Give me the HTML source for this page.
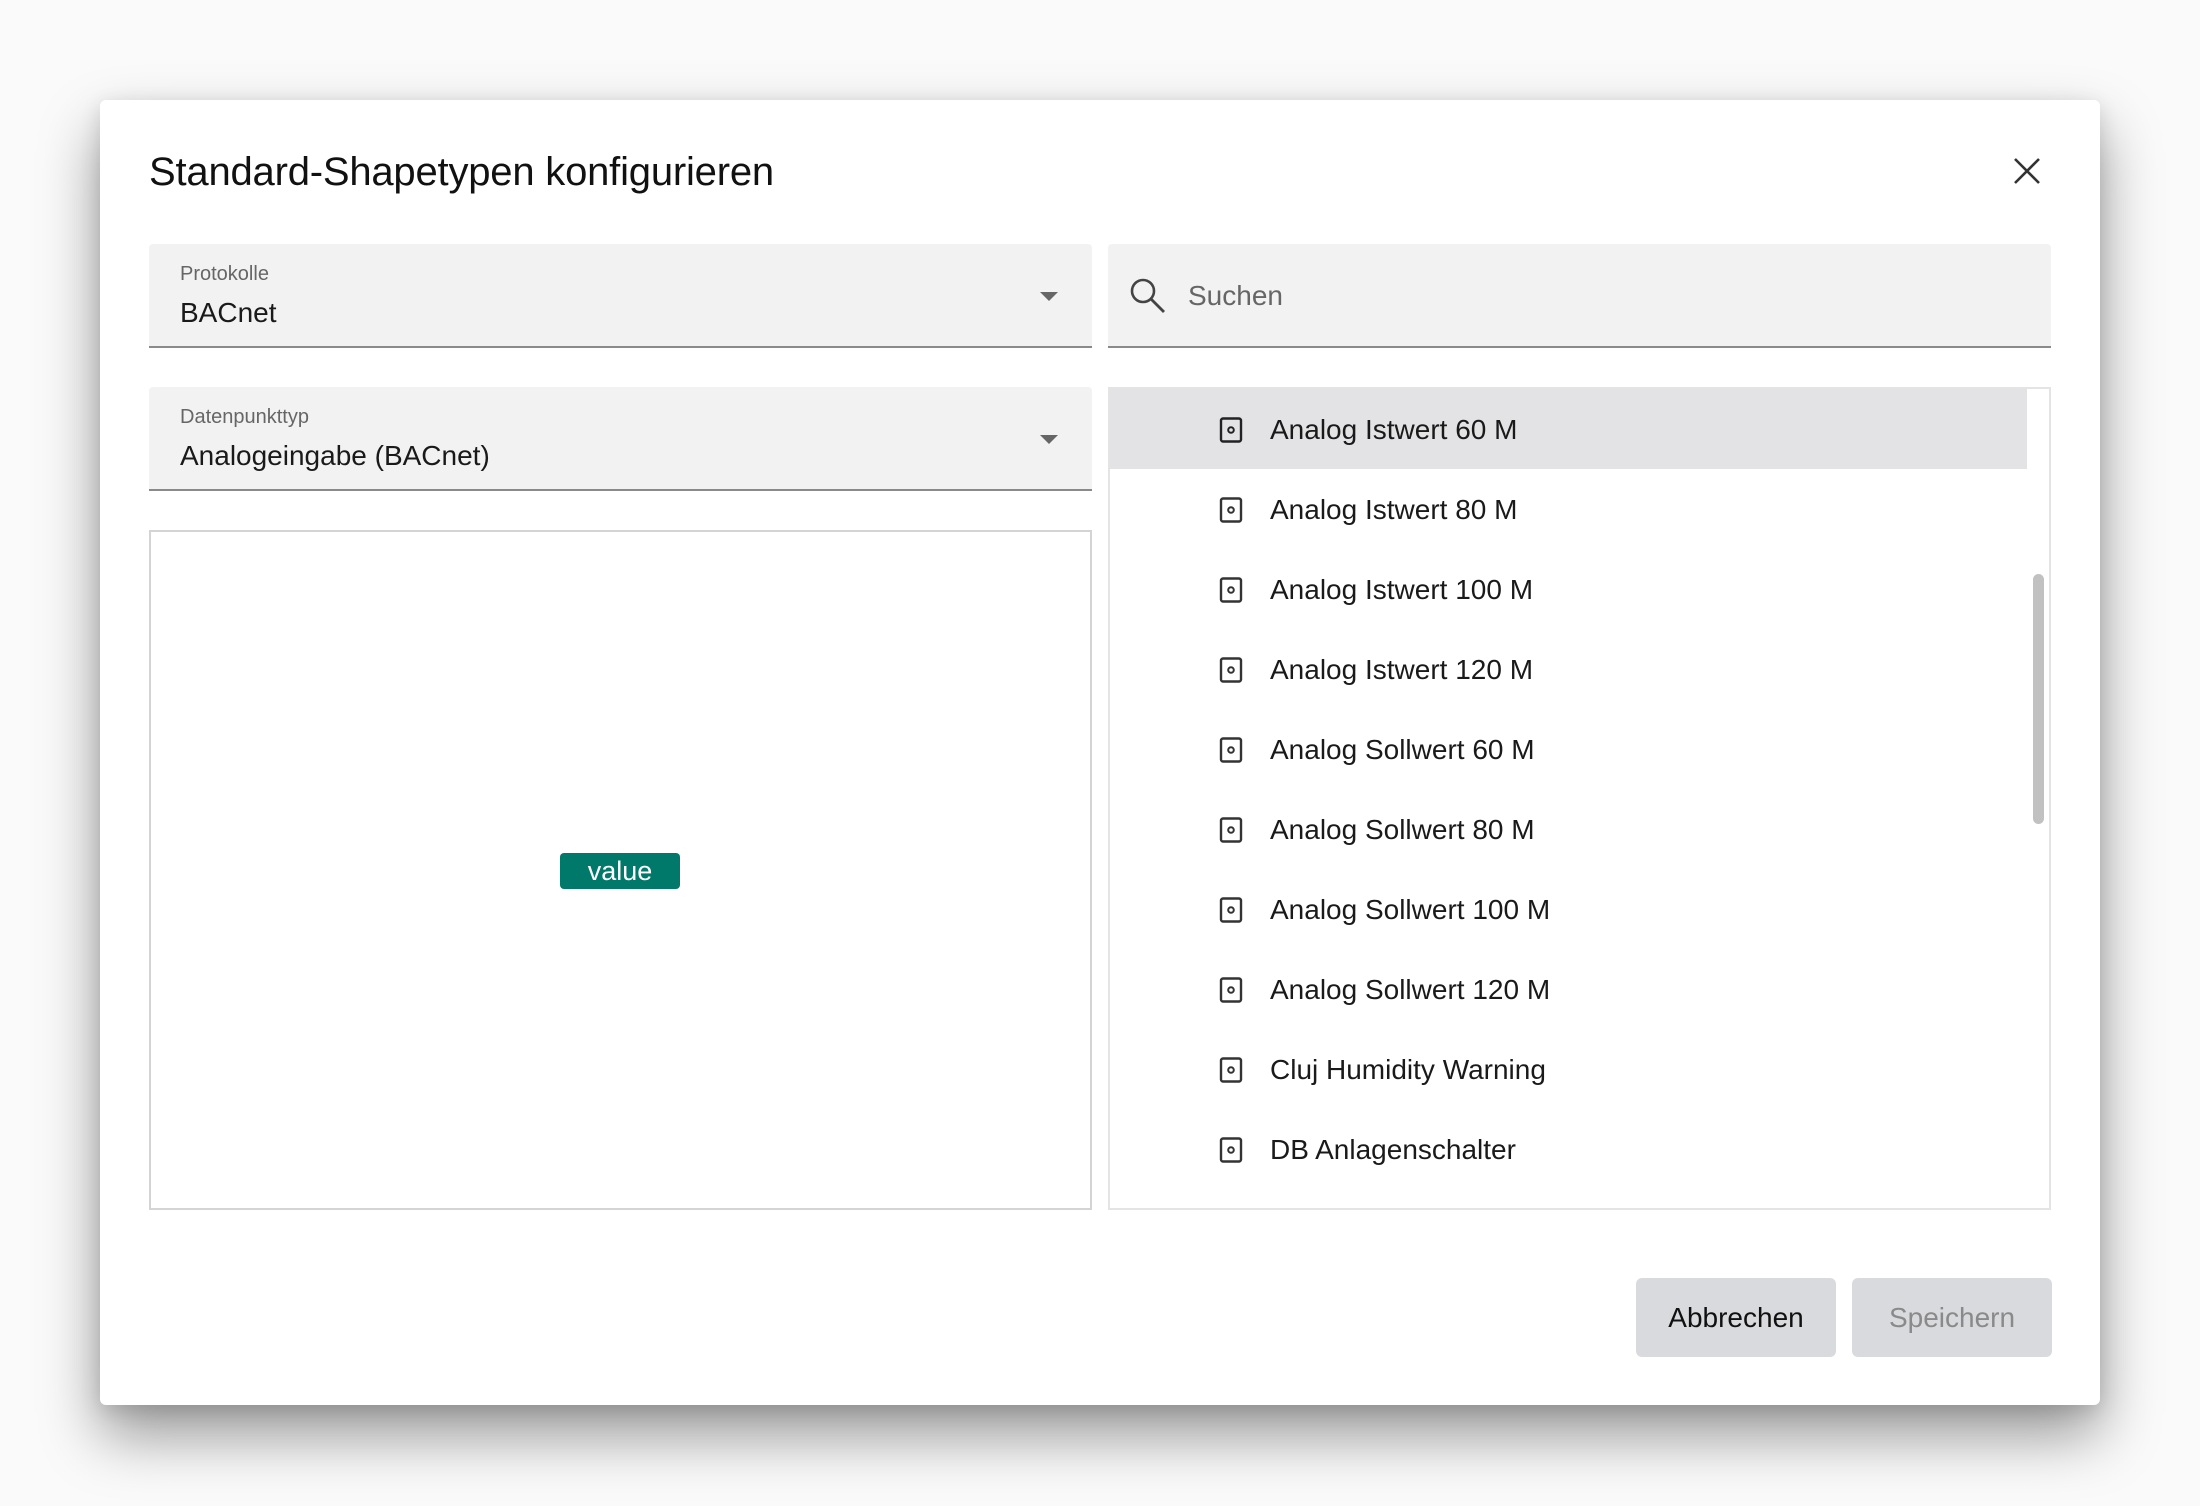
<!DOCTYPE html>
<html><head><meta charset="utf-8"><style>
*{box-sizing:border-box;margin:0;padding:0}
body{width:2200px;height:1506px;background:#fafafa;font-family:"Liberation Sans",Roboto,sans-serif;position:relative;overflow:hidden;color:#1a1a1a}
.dlg{position:absolute;left:100px;top:100px;width:2000px;height:1305px;background:#fff;border-radius:6px;box-shadow:0 30px 60px rgba(0,0,0,0.4),0 5px 20px rgba(0,0,0,0.12)}
.a{position:absolute}
.title{left:149px;top:150px;font-size:40px;color:#111;letter-spacing:-0.2px}
.field{background:#f2f2f2;border-bottom:2px solid #8a8a8a;border-radius:4px 4px 0 0}
.lbl{font-size:20px;color:#666}
.val{font-size:28px;color:#1a1a1a}
.arrow{width:0;height:0;border-left:9px solid transparent;border-right:9px solid transparent;border-top:9px solid #666}
.row{position:absolute;left:1110px;width:917px;height:80px}
.row span{position:absolute;left:160px;top:25px;font-size:28px;color:#1a1a1a;white-space:nowrap}
.row svg{position:absolute;left:108px;top:28px}
.btn{background:#d9dadd;border-radius:6px;font-size:28px;text-align:center;line-height:79px;height:79px;width:200px}
</style></head><body>
<div class="dlg"></div>
<div class="a title">Standard-Shapetypen konfigurieren</div>
<svg class="a" style="left:2013px;top:157px" width="28" height="28" viewBox="0 0 28 28"><path d="M2 2L26 26M26 2L2 26" stroke="#333" stroke-width="2.6"/></svg>

<div class="a field" style="left:149px;top:244px;width:943px;height:104px"></div>
<div class="a lbl" style="left:180px;top:263px">Protokolle</div>
<div class="a val" style="left:180px;top:297px">BACnet</div>
<div class="a arrow" style="left:1040px;top:292px"></div>

<div class="a field" style="left:1108px;top:244px;width:943px;height:104px"></div>
<svg class="a" style="left:1128px;top:276px" width="40" height="40" viewBox="0 0 40 40"><circle cx="15" cy="15" r="11" fill="none" stroke="#444" stroke-width="2.6"/><path d="M23 23L36 36" stroke="#444" stroke-width="2.8"/></svg>
<div class="a" style="left:1188px;top:280px;font-size:28px;color:#666">Suchen</div>

<div class="a field" style="left:149px;top:387px;width:943px;height:104px"></div>
<div class="a lbl" style="left:180px;top:406px">Datenpunkttyp</div>
<div class="a val" style="left:180px;top:440px">Analogeingabe (BACnet)</div>
<div class="a arrow" style="left:1040px;top:435px"></div>

<div class="a" style="left:149px;top:530px;width:943px;height:680px;border:2px solid #d4d4d4"></div>
<div class="a" style="left:560px;top:853px;width:120px;height:36px;background:#00796b;border-radius:4px;color:#fff;font-size:27px;text-align:center;line-height:36px">value</div>

<div class="a" style="left:1108px;top:387px;width:943px;height:823px;border:2px solid #e4e4e4"></div>
<div class="row" style="top:389px;background:#e3e3e5"><svg width="26" height="26" viewBox="0 0 26 26"><rect x="3" y="1.5" width="20" height="23" rx="2" fill="none" stroke="#222" stroke-width="2.4"/><circle cx="13" cy="13" r="2.8" fill="none" stroke="#222" stroke-width="2"/></svg><span>Analog Istwert 60 M</span></div>
<div class="row" style="top:469px"><svg width="26" height="26" viewBox="0 0 26 26"><rect x="3" y="1.5" width="20" height="23" rx="2" fill="none" stroke="#333" stroke-width="2.4"/><circle cx="13" cy="13" r="2.8" fill="none" stroke="#333" stroke-width="2"/></svg><span>Analog Istwert 80 M</span></div>
<div class="row" style="top:549px"><svg width="26" height="26" viewBox="0 0 26 26"><rect x="3" y="1.5" width="20" height="23" rx="2" fill="none" stroke="#333" stroke-width="2.4"/><circle cx="13" cy="13" r="2.8" fill="none" stroke="#333" stroke-width="2"/></svg><span>Analog Istwert 100 M</span></div>
<div class="row" style="top:629px"><svg width="26" height="26" viewBox="0 0 26 26"><rect x="3" y="1.5" width="20" height="23" rx="2" fill="none" stroke="#333" stroke-width="2.4"/><circle cx="13" cy="13" r="2.8" fill="none" stroke="#333" stroke-width="2"/></svg><span>Analog Istwert 120 M</span></div>
<div class="row" style="top:709px"><svg width="26" height="26" viewBox="0 0 26 26"><rect x="3" y="1.5" width="20" height="23" rx="2" fill="none" stroke="#333" stroke-width="2.4"/><circle cx="13" cy="13" r="2.8" fill="none" stroke="#333" stroke-width="2"/></svg><span>Analog Sollwert 60 M</span></div>
<div class="row" style="top:789px"><svg width="26" height="26" viewBox="0 0 26 26"><rect x="3" y="1.5" width="20" height="23" rx="2" fill="none" stroke="#333" stroke-width="2.4"/><circle cx="13" cy="13" r="2.8" fill="none" stroke="#333" stroke-width="2"/></svg><span>Analog Sollwert 80 M</span></div>
<div class="row" style="top:869px"><svg width="26" height="26" viewBox="0 0 26 26"><rect x="3" y="1.5" width="20" height="23" rx="2" fill="none" stroke="#333" stroke-width="2.4"/><circle cx="13" cy="13" r="2.8" fill="none" stroke="#333" stroke-width="2"/></svg><span>Analog Sollwert 100 M</span></div>
<div class="row" style="top:949px"><svg width="26" height="26" viewBox="0 0 26 26"><rect x="3" y="1.5" width="20" height="23" rx="2" fill="none" stroke="#333" stroke-width="2.4"/><circle cx="13" cy="13" r="2.8" fill="none" stroke="#333" stroke-width="2"/></svg><span>Analog Sollwert 120 M</span></div>
<div class="row" style="top:1029px"><svg width="26" height="26" viewBox="0 0 26 26"><rect x="3" y="1.5" width="20" height="23" rx="2" fill="none" stroke="#333" stroke-width="2.4"/><circle cx="13" cy="13" r="2.8" fill="none" stroke="#333" stroke-width="2"/></svg><span>Cluj Humidity Warning</span></div>
<div class="row" style="top:1109px"><svg width="26" height="26" viewBox="0 0 26 26"><rect x="3" y="1.5" width="20" height="23" rx="2" fill="none" stroke="#333" stroke-width="2.4"/><circle cx="13" cy="13" r="2.8" fill="none" stroke="#333" stroke-width="2"/></svg><span>DB Anlagenschalter</span></div>
<div class="a" style="left:2033px;top:574px;width:11px;height:250px;background:#c1c1c1;border-radius:6px"></div>

<div class="a btn" style="left:1636px;top:1278px;color:#111">Abbrechen</div>
<div class="a btn" style="left:1852px;top:1278px;color:#8a8a8a">Speichern</div>
</body></html>
